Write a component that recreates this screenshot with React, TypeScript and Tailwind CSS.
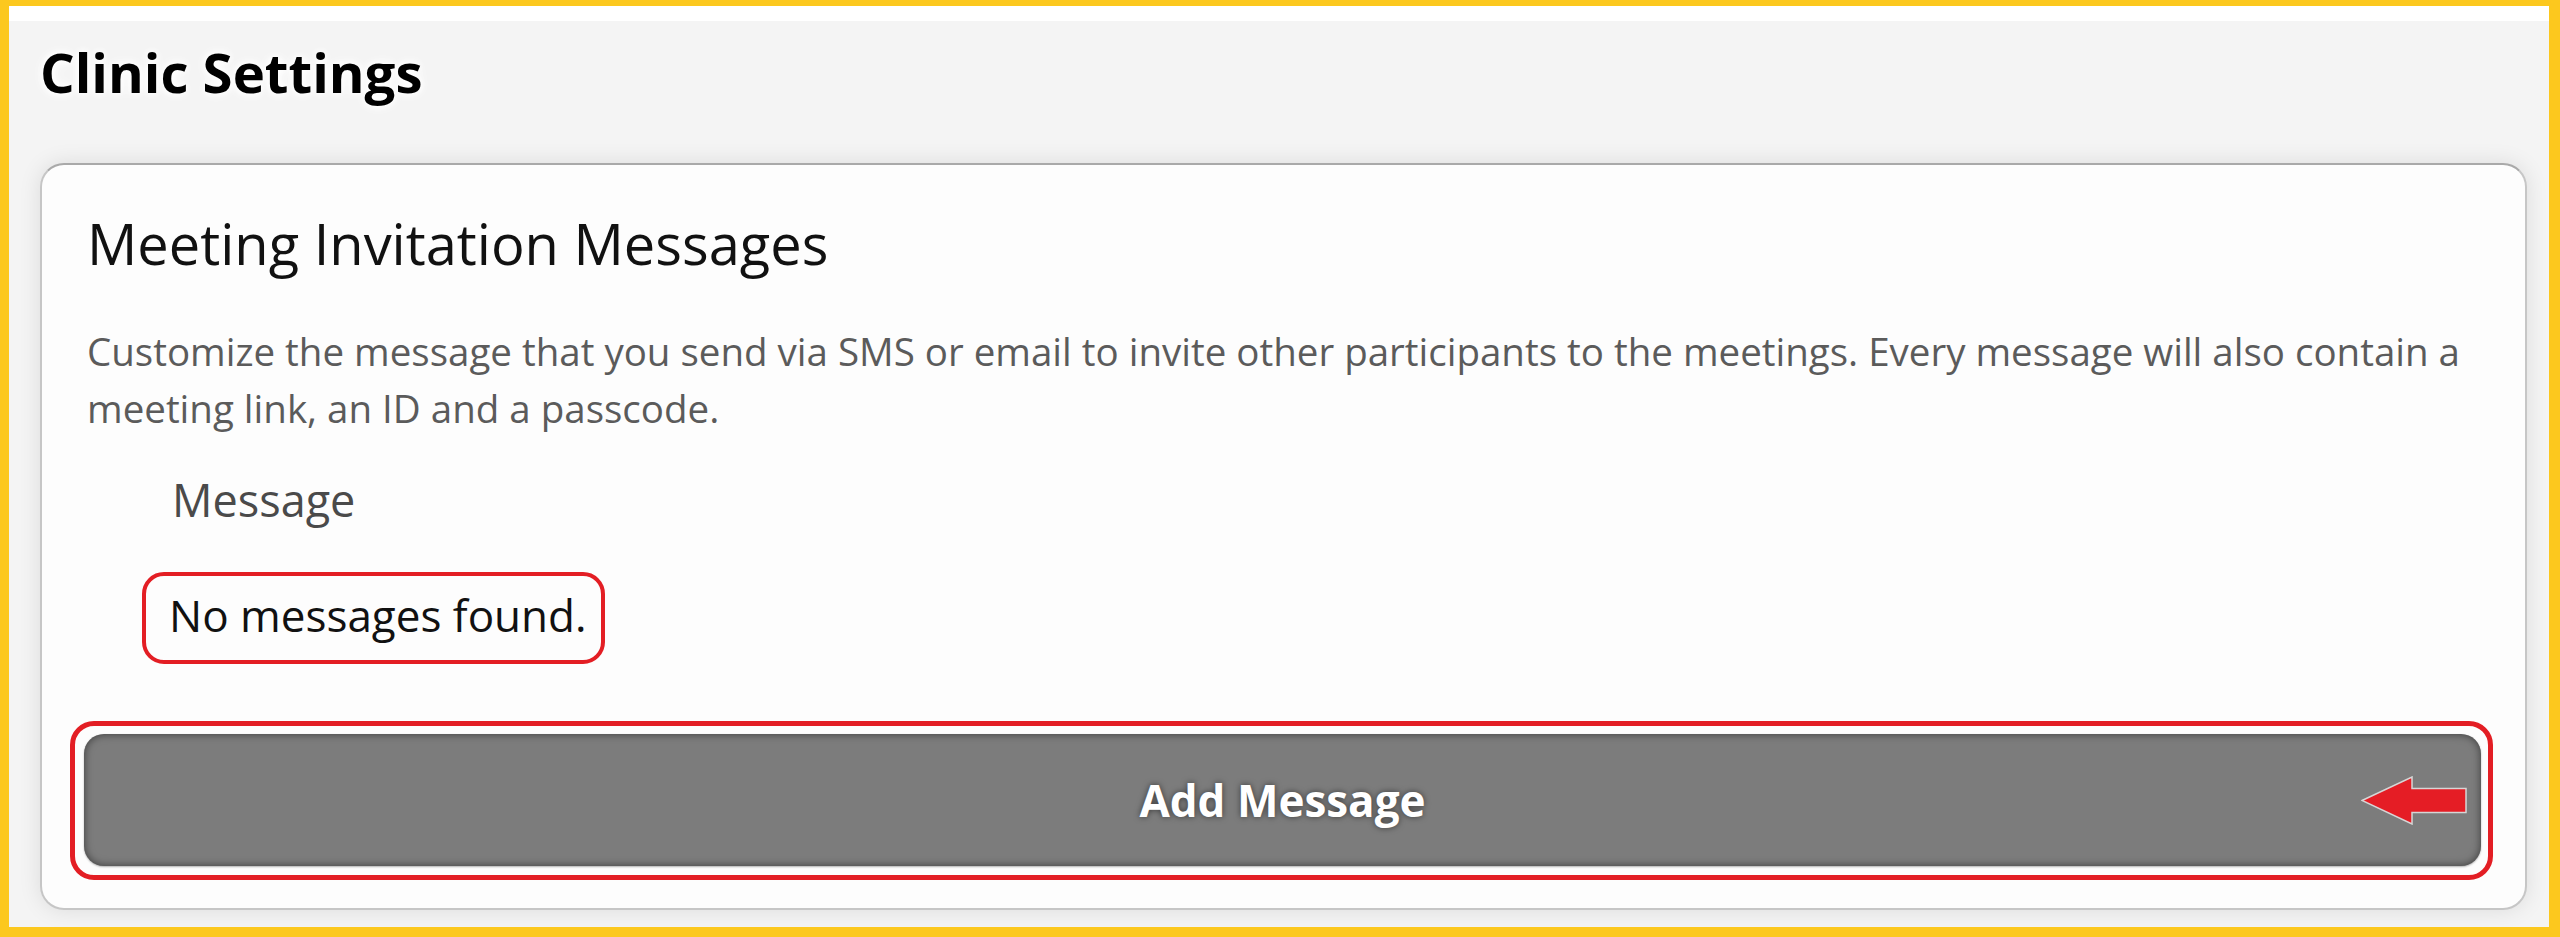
import React from "react";

const FONT = "font-['Open_Sans','Noto_Sans',sans-serif]";

function RedArrow() {
  return (
    <svg width="106" height="49" viewBox="-1 -1 106 49" className="block">
      <polygon
        points="0,23.5 50,0 50,11.5 104,11.5 104,35.5 50,35.5 50,47"
        fill="#e51d25"
        stroke="#d6d6d6"
        strokeWidth="1.5"
      />
    </svg>
  );
}

export default function App() {
  return (
    <div
      className={`${FONT} w-[2560px] h-[937px] flex flex-col bg-[#f4f4f4] border-t-[6px] border-l-[9px] border-r-[11px] border-b-[10px] border-[#fcc81e] overflow-hidden`}
    >
      <div className="h-[15px] bg-white shrink-0" />

      {/* page title */}
      <div className="pl-[31px] pt-[24px]">
        <h1 className="text-[54.5px] leading-none font-bold text-black [text-shadow:0_0_6px_#fff,0_0_10px_#fff,0_0_14px_#fff]">
          Clinic Settings
        </h1>
      </div>

      {/* card */}
      <div className="ml-[31px] mr-[22px] mt-[63px] bg-[#fdfdfd] rounded-[24px] border-2 border-[#c6c6c6] border-t-[#a9a9a9] shadow-[0_0_22px_rgba(0,0,0,0.10)] px-[45px] pt-[50px] pb-[28px]">
        <h2 className="text-[56px] leading-none font-normal text-[#111]">
          Meeting Invitation Messages
        </h2>

        <p className="mt-[52px] text-[38.5px] leading-[57px] text-[#5b5b5b]">
          Customize the message that you send via SMS or email to invite other participants to the meetings. Every message will also contain a meeting link, an ID and a passcode.
        </p>

        <div className="mt-[40px] pl-[85px] text-[45px] leading-none text-[#4a4a4a]">
          Message
        </div>

        <div className="mt-[50px] ml-[55px] inline-flex border-[4px] border-[#e31e24] rounded-[22px] pl-[23px] pr-[14px] pt-[17px] pb-[23px]">
          <span className="text-[44px] leading-none text-[#111]">No messages found.</span>
        </div>

        <div className="mt-[57px] ml-[-17px] mr-[-13px] border-[5px] border-[#e31e24] rounded-[24px] pl-[9px] pr-[7px] pt-[8px] pb-[9px]">
          <button className="relative w-full h-[132px] rounded-[20px] bg-[#7c7c7c] shadow-[inset_0_0_8px_rgba(0,0,0,0.55),0_1px_2px_rgba(0,0,0,0.3)] flex items-center justify-center">
            <span className="text-[44px] leading-none font-bold text-white [text-shadow:0_0_6px_rgba(0,0,0,0.55)]">
              Add Message
            </span>
            <span className="absolute right-[14px] top-[42px]">
              <RedArrow />
            </span>
          </button>
        </div>
      </div>
    </div>
  );
}
